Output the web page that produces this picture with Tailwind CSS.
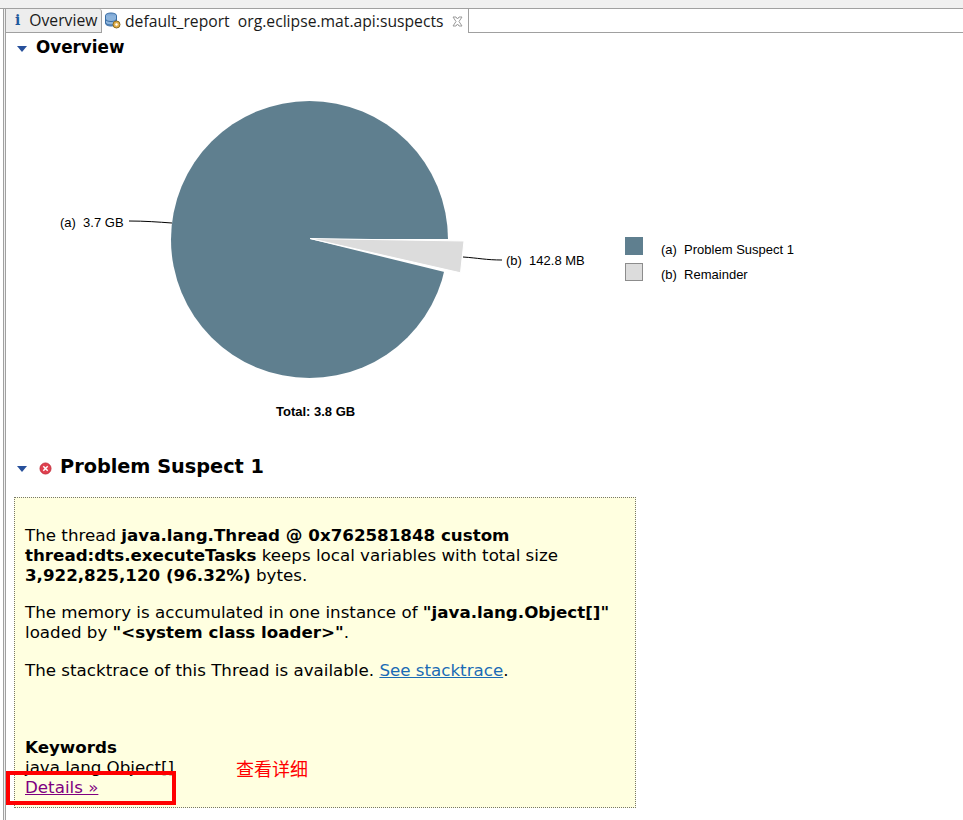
<!DOCTYPE html>
<html lang="en">
<head>
<meta charset="UTF-8">
<title>default_report org.eclipse.mat.api:suspects</title>
<script src="https://cdn.jsdelivr.net/npm/@tailwindcss/browser@4"></script>
</head>
<body class="bg-white w-[963px] h-[820px] overflow-hidden relative font-['DejaVu_Sans',sans-serif] text-black">

<!-- window strip -->
<div class="h-[9px] bg-[#f0f0f0] border-b border-[#a0a0a0]"></div>

<div class="flex h-[811px]">
  <div class="w-[3px] shrink-0 bg-[#f0f0f0] border-l border-r border-[#a0a0a0] ml-[3px]"></div>
  <div class="flex-1 min-w-0">
    <!-- tabs -->
    <div class="flex h-[24px] border-b border-[#a0a0a0] text-[15.700px] leading-[23px]">
      <div class="w-[96px] h-[23px] bg-[#ededed] border-r border-[#a0a0a0] rounded-tr-[3px] flex items-center pl-[9px] gap-[9px] text-[#1a1a1a] font-['Open_Sans',sans-serif]">
        <span class="text-[#1f5a9e] font-['DejaVu_Serif',serif] font-bold text-[14px]">i</span>
        <span>Overview</span>
      </div>
      <div class="h-[24px] w-[367px] bg-white border-r border-[#a0a0a0] flex items-center pl-[2px] relative font-['Open_Sans',sans-serif] text-[#1a1a1a]">
        <svg width="18" height="18" viewBox="0 0 18 18" class="shrink-0">
          <ellipse cx="7" cy="3.500" rx="5.500" ry="2.500" fill="#7fa9d6" stroke="#3a6ea5"/>
          <path d="M1.500 3.500v8c0 1.400 2.500 2.500 5.500 2.500s5.500-1.100 5.500-2.500v-8" fill="#8db4dc" stroke="#3a6ea5"/>
          <path d="M1.500 7c0 1.400 2.500 2.500 5.500 2.500s5.500-1.100 5.500-2.500M1.500 10.500c0 1.400 2.500 2.500 5.500 2.500s5.500-1.100 5.500-2.500" fill="none" stroke="#3a6ea5"/>
          <circle cx="12.500" cy="12.500" r="3.500" fill="#e2b04a" stroke="#8a6a20"/>
          <circle cx="12.500" cy="12.500" r="1.200" fill="#fff"/>
        </svg>
        <span class="ml-[3px] whitespace-pre">default_report  org.eclipse.mat.api:suspects</span>
        <svg width="11" height="11" viewBox="0 0 11 11" class="absolute left-[350px] top-[7px]">
          <path d="M1 1l3 0 1.500 2 1.500-2 3 0-3 4.500 3 4.500-3 0-1.500-2-1.500 2-3 0 3-4.500z" fill="#fff" stroke="#9a9a9a"/>
        </svg>
      </div>
    </div>

    <div class="pl-[8px]">
      <!-- Overview section -->
      <div class="flex items-center h-[28px] pt-[1px]">
        <svg width="10" height="6" viewBox="0 0 10 6" class="ml-[3px] mt-[3px]"><path d="M0 0h10L5 6z" fill="#27509b"/></svg>
        <h2 class="ml-[9px] text-[16.800px] font-bold leading-none">Overview</h2>
      </div>

      <!-- chart: free canvas -->
      <div class="relative h-[384px] font-['Liberation_Sans',sans-serif] text-[13px] leading-[14px]">
        <svg width="830" height="384" class="absolute -left-[14px] -top-[61px] overflow-visible">
          <circle cx="309.500" cy="239.500" r="138.500" fill="#5f7f8f"/>
          <path d="M310 239L450 239L450 272L444.500 272z" fill="#fff"/>
          <path d="M310 238.500L464 241L460.500 272.800z" fill="#dcdcdc" stroke="#fff"/>
          <path d="M129 221C145 221 158 222 172 223" fill="none" stroke="#000"/>
          <path d="M463 257C478 258 486 260 502 260" fill="none" stroke="#000"/>
          <rect x="625.500" y="237.500" width="17" height="17" fill="#5f7f8f" stroke="#5f7f8f"/>
          <rect x="625.500" y="263.500" width="17" height="17" fill="#dcdcdc" stroke="#8c8c8c"/>
        </svg>
        <span class="absolute left-[46px] top-[155px] whitespace-pre">(a)  3.7 GB</span>
        <span class="absolute left-[492px] top-[193px] whitespace-pre">(b)  142.8 MB</span>
        <span class="absolute left-[647px] top-[182px] whitespace-pre">(a)  Problem Suspect 1</span>
        <span class="absolute left-[647px] top-[207px] whitespace-pre">(b)  Remainder</span>
        <span class="absolute left-[262px] top-[344px] font-bold">Total: 3.8 GB</span>
      </div>

      <!-- suspect -->
      <div class="flex items-center h-[26px] mt-[9px]">
        <svg width="10" height="6" viewBox="0 0 10 6" class="ml-[3px] mt-[3px]"><path d="M0 0h10L5 6z" fill="#27509b"/></svg>
        <svg width="13" height="13" viewBox="0 0 13 13" class="ml-[12px] mt-[2px]">
          <circle cx="6.500" cy="6.500" r="5.500" fill="#e0404f" stroke="#c5303e"/>
          <path d="M4.300 4.300l4.400 4.400M8.700 4.300l-4.400 4.400" stroke="#fff" stroke-width="1.500"/>
        </svg>
        <h2 class="ml-[8px] text-[19.300px] font-bold leading-none">Problem Suspect 1</h2>
      </div>

      <div class="w-[622px] h-[311px] mt-[17px] border border-dotted border-[#77776a] bg-[#ffffe0] pl-[10px] pt-[27px] text-[16.700px] leading-[20px]">
        <p>The thread <b>java.lang.Thread @ 0x762581848 custom thread:dts.executeTasks</b> keeps local variables with total size <b>3,922,825,120 (96.32%)</b> bytes.</p>
        <p class="mt-[17px]">The memory is accumulated in one instance of <b>"java.lang.Object[]"</b> loaded by <b>"&lt;system class loader&gt;"</b>.</p>
        <p class="mt-[18px]">The stacktrace of this Thread is available. <a class="text-[#1a6bb5] underline">See stacktrace</a>.</p>
        <p class="mt-[57px] font-bold">Keywords</p>
        <p>java.lang.Object[]</p>
        <a class="text-[#800080] underline">Details »</a>
      </div>
    </div>
  </div>
</div>

<!-- annotations pasted on top of the screenshot -->
<div class="absolute left-[6px] top-[771px] w-[170px] h-[34px] border-[4px] border-[#ff0000]"></div>
<span class="absolute left-[236px] top-[757px] text-[18px] leading-[22px] text-[#ff0000] font-['Noto_Sans_CJK_SC',sans-serif]">查看详细</span>

</body>
</html>
